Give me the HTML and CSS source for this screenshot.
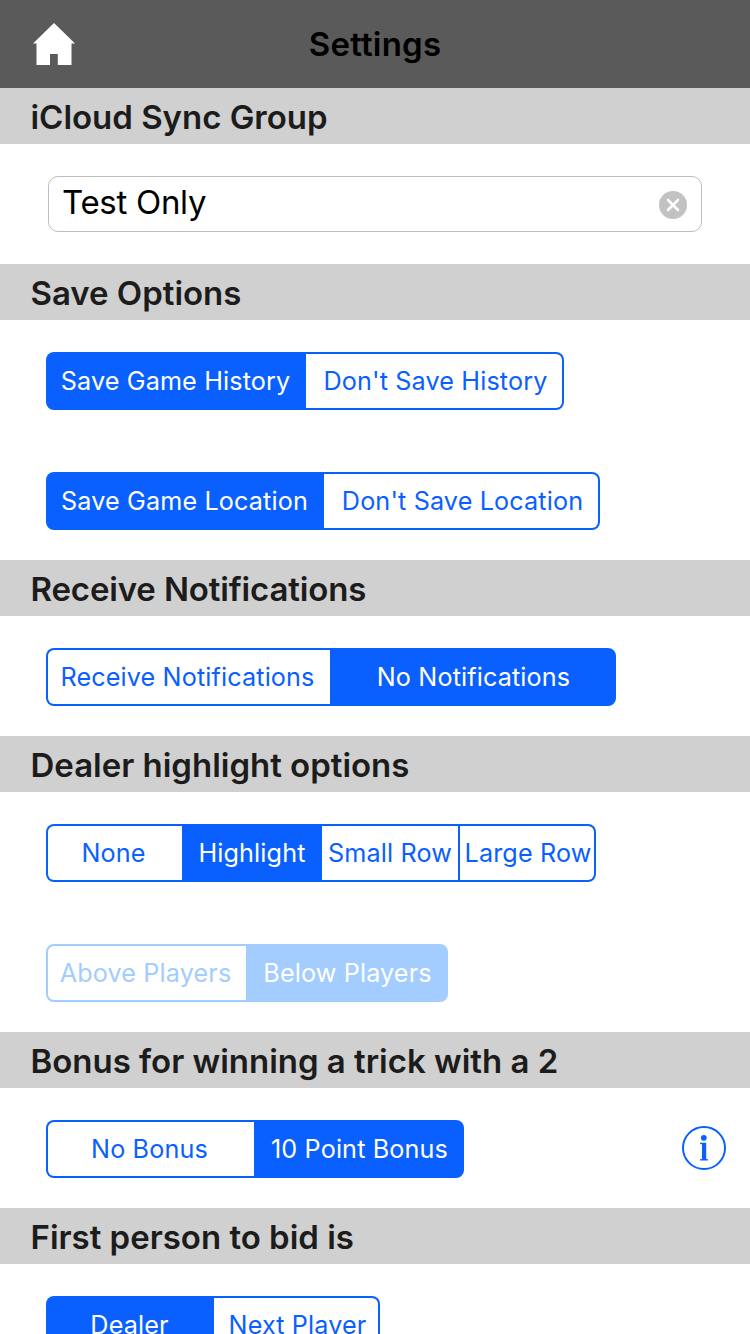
FILE: index.html
```html
<!DOCTYPE html>
<html lang="en">
<head>
<meta charset="utf-8">
<title>Settings</title>
<link rel="stylesheet" href="styles.css">
</head>
<body>
<div class="screen">
  <header class="navbar">
    <svg class="home" width="42" height="42" viewBox="0 0 42 42"><path fill="#fff" d="M21 0 42 20.5H38.5V42H24.8V31H17V42H3.5V20.5H0Z"/></svg>
    <h1 class="title">Settings</h1>
  </header>
  <h2 class="heading">iCloud Sync Group</h2>
  <div class="group">
    <div class="field"><span class="value">Test Only</span>
      <svg class="clear" width="28" height="28" viewBox="0 0 28 28"><circle cx="14" cy="14" r="14" fill="#c2c2c2"/><path d="M9 9 19 19M19 9 9 19" stroke="#fff" stroke-width="2.6" stroke-linecap="round"/></svg>
    </div>
  </div>
  <h2 class="heading">Save Options</h2>
  <div class="group">
    <div class="segmented history"><span class="seg on">Save Game History</span><span class="seg">Don't Save History</span></div>
    <div class="segmented location"><span class="seg on">Save Game Location</span><span class="seg">Don't Save Location</span></div>
  </div>
  <h2 class="heading snug">Receive Notifications</h2>
  <div class="group">
    <div class="segmented notify"><span class="seg">Receive Notifications</span><span class="seg on">No Notifications</span></div>
  </div>
  <h2 class="heading">Dealer highlight options</h2>
  <div class="group">
    <div class="segmented dealer"><span class="seg">None</span><span class="seg on">Highlight</span><span class="seg">Small Row</span><span class="seg ruled">Large Row</span></div>
    <div class="segmented position disabled"><span class="seg">Above Players</span><span class="seg on">Below Players</span></div>
  </div>
  <h2 class="heading">Bonus for winning a trick with a 2</h2>
  <div class="group with-info">
    <div class="segmented bonus"><span class="seg">No Bonus</span><span class="seg on">10 Point Bonus</span></div>
    <svg class="info" width="44" height="44" viewBox="0 0 44 44"><circle cx="22" cy="22" r="21" fill="none" stroke="#0a60ff" stroke-width="2"/><g fill="#0a60ff"><circle cx="21.8" cy="11.8" r="2.9"/><path d="M18 16.8H24.2V33L26 33.3V34.4H18V33.3L20 33V18.2L18 17.9Z"/></g></svg>
  </div>
  <h2 class="heading">First person to bid is</h2>
  <div class="group">
    <div class="segmented first"><span class="seg on">Dealer</span><span class="seg">Next Player</span></div>
  </div>
</div>
</body>
</html>
```
FILE: styles.css
```css
* { box-sizing: border-box; }
body { margin: 0; background: #fff; }
.screen { width: 750px; height: 1334px; overflow: hidden; font-family: Inter, "Liberation Sans", sans-serif; }
.navbar { height: 88px; background: #5a5a5a; display: grid; grid-template-columns: 75px 1fr 75px; align-items: center; }
.home { justify-self: end; }
.title { margin: 0; text-align: center; font-size: 33px; line-height: 40px; font-weight: 600; letter-spacing: 0.2px; color: #000; }
.heading { margin: 0; height: 56px; padding: 0 30.5px; background: #d0d0d0; color: #1c1c1c; font-size: 33px; line-height: 58px; font-weight: 600; letter-spacing: -0.02px; white-space: nowrap; }
.snug { letter-spacing: -0.15px; }
.group { padding: 32px 46px 30px; display: flex; flex-direction: column; align-items: flex-start; gap: 62px; }
.field { width: 654px; height: 56px; margin: 0 2px 2px; border: 1px solid #bdbdbd; border-radius: 10px; display: flex; align-items: center; justify-content: space-between; padding: 0 14px 0 13px; }
.value { font-size: 33px; line-height: 40px; padding-bottom: 5px; letter-spacing: -0.3px; color: #000; }
.clear { margin-top: 2px; }
.segmented { --tint: #0a60ff; height: 58px; padding: 2px; border-radius: 8px; display: grid; background: var(--tint); color: var(--tint); font-size: 25.2px; letter-spacing: 0.13px; }
.seg { display: flex; align-items: center; justify-content: center; white-space: nowrap; min-width: 0; padding-bottom: 1px; background: #fff; }
.seg:first-child { padding-right: 3px; border-radius: 6px 0 0 6px; }
.seg:last-child { padding-left: 3px; border-radius: 0 6px 6px 0; }
.seg.on { background: transparent; color: #fff; }
.seg.ruled { margin-left: 2px; padding-left: 2px; }
.disabled { --tint: #a3ccff; }
.history { grid-template-columns: 258px 256px; }
.location { grid-template-columns: 276px 274px; }
.notify { grid-template-columns: 282px 284px; }
.dealer { grid-template-columns: 134px 140px 136px 136px; }
.position { grid-template-columns: 198px 200px; }
.bonus { grid-template-columns: 206px 208px; }
.first { grid-template-columns: 166px 164px; }
.with-info { flex-direction: row; justify-content: space-between; align-items: flex-start; padding-right: 24px; }
.info { margin-top: 6px; }
```
